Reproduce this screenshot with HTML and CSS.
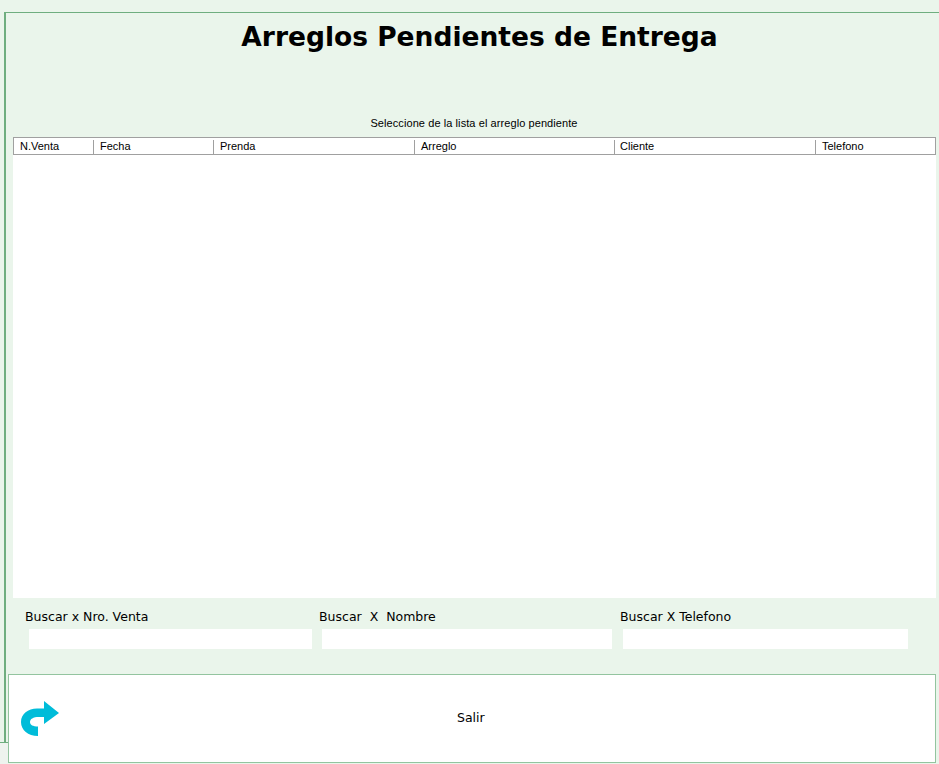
FILE: index.html
```html
<!DOCTYPE html>
<html lang="es">
<head>
<meta charset="utf-8">
<title>Arreglos Pendientes de Entrega</title>
<link rel="stylesheet" href="styles.css">
</head>
<body>
<div class="top-gap"></div>
<div class="frame">
  <h1 class="title">Arreglos Pendientes de Entrega</h1>
  <p class="hint">Seleccione de la lista el arreglo pendiente</p>
  <div class="list">
    <div class="list-head">
      <div class="col col-venta">N.Venta</div>
      <div class="col col-fecha">Fecha</div>
      <div class="col col-prenda">Prenda</div>
      <div class="col col-arreglo">Arreglo</div>
      <div class="col col-cliente">Cliente</div>
      <div class="col col-telefono">Telefono</div>
    </div>
    <div class="list-body"></div>
  </div>
  <div class="search">
    <div class="field field-a">
      <label class="field-label">Buscar x Nro. Venta</label>
      <div class="field-input"></div>
    </div>
    <div class="field field-b">
      <label class="field-label">Buscar&nbsp; X&nbsp; Nombre</label>
      <div class="field-input"></div>
    </div>
    <div class="field field-c">
      <label class="field-label">Buscar X Telefono</label>
      <div class="field-input"></div>
    </div>
  </div>
  <div class="exit">
    <svg class="exit-icon" viewBox="0 0 38 35" width="38" height="35" aria-hidden="true">
      <path fill="#00bcd9" d="M23 0 L38 12 L23 23 L23 16 L18 16 C12 16 9 18 9 21 C9 24 12 25.5 17 25.5 L17 35 C7 35 0 29 0 21 C0 13 7 7.5 16 7.5 L23 7.5 Z"/>
    </svg>
    <span class="exit-label">Salir</span>
  </div>
</div>
<div class="frame-foot"></div>
</body>
</html>
```

FILE: styles.css
```css
html, body {
  margin: 0;
  padding: 0;
}

body {
  width: 939px;
  height: 764px;
  overflow: hidden;
  background: #eaf5eb;
  font-family: "DejaVu Sans", Verdana, sans-serif;
  color: #000;
}

.top-gap {
  height: 12px;
}

.frame {
  box-sizing: border-box;
  height: 730px;
  margin-left: 4px;
  border-top: 1px solid #6fae7f;
  border-left: 2px solid #6fae7f;
}

.frame-foot {
  box-sizing: border-box;
  width: 8px;
  height: 22px;
  background: #eef3ee;
  border-top: 1px solid #6fae7f;
}

.title {
  margin: 0;
  height: 46px;
  padding-left: 14px;
  text-align: center;
  font-size: 26.5px;
  line-height: 47px;
  font-weight: 700;
}

.hint {
  margin: 56px 0 0;
  height: 22px;
  padding-left: 3px;
  box-sizing: border-box;
  text-align: center;
  font-family: "Liberation Sans", Arial, sans-serif;
  font-size: 11px;
  letter-spacing: 0.08px;
  line-height: 16px;
}

.list {
  margin-left: 7px;
  width: 923px;
}

.list-head {
  box-sizing: border-box;
  height: 18px;
  display: flex;
  background: #fff;
  border: 1px solid #a0a0a0;
  font-family: "Liberation Sans", Arial, sans-serif;
  font-size: 11px;
}

.col {
  box-sizing: border-box;
  height: 14px;
  margin-top: 2px;
  padding-left: 6px;
  line-height: 13px;
  border-right: 1px solid #a0a0a0;
}

.col-venta { width: 80px; }
.col-fecha { width: 120px; }
.col-prenda { width: 201px; }
.col-arreglo { width: 200px; }
.col-cliente { width: 201px; padding-left: 5px; }
.col-telefono { flex: 1; border-right: 0; }

.list-body {
  height: 443px;
  background: #fff;
}

.search {
  display: flex;
  height: 76px;
}

.field {
  display: flex;
  flex-direction: column;
}

.field-a { margin-left: 19px; width: 294px; }
.field-b { width: 301px; }
.field-c { width: 289px; }

.field-label {
  height: 31px;
  padding-top: 10px;
  box-sizing: border-box;
  font-size: 12.5px;
  line-height: 18px;
  white-space: nowrap;
}

.field-input {
  height: 20px;
  background: #fff;
}

.field-a .field-input { margin-left: 4px; width: 283px; }
.field-b .field-input { margin-left: 3px; width: 290px; }
.field-c .field-input { margin-left: 3px; width: 285px; }

.exit {
  box-sizing: border-box;
  display: flex;
  align-items: center;
  margin-left: 2px;
  width: 928px;
  height: 89px;
  background: #fff;
  border: 1px solid #93c49f;
}

.exit-icon {
  flex: none;
  margin-left: 12px;
}

.exit-label {
  margin-left: 398px;
  margin-top: -2px;
  font-size: 12.5px;
  line-height: 18px;
}
```
